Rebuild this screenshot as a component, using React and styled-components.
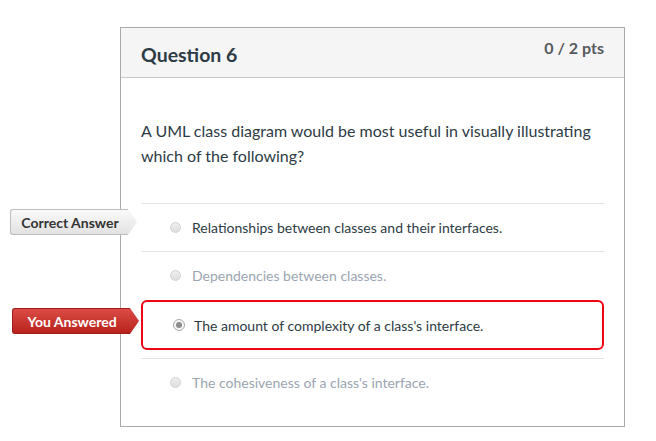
import React from 'react';
import styled, { createGlobalStyle, css } from 'styled-components';

const GlobalStyle = createGlobalStyle`
  body {
    margin: 0;
    background: #ffffff;
    font-family: Lato, "Open Sans", sans-serif;
  }
`;

const Page = styled.div`
  padding: 27px 0 0 120px;
`;

const Card = styled.div`
  width: 503px;
  height: 398px;
  border: 1px solid #aaaaaa;
  background: #ffffff;
`;

const Header = styled.div`
  height: 49px;
  background: #f5f5f5;
  border-bottom: 1px solid #c7c7c7;
  display: flex;
  justify-content: space-between;
  padding: 0 20px;
`;

const Title = styled.h2`
  margin: 15px 0 0;
  font-size: 19.5px;
  line-height: 24px;
  font-weight: 700;
  color: #2d3b45;
`;

const Points = styled.div`
  margin-top: 10px;
  font-size: 16px;
  line-height: 20px;
  font-weight: 700;
  color: #555a5e;
`;

const Body = styled.div`
  padding: 40px 20px 0 20px;
`;

const QuestionText = styled.p`
  margin: 0 0 35px;
  font-size: 16px;
  line-height: 25px;
  color: #2d3b45;
`;

const Answers = styled.div`
  display: flex;
  flex-direction: column;
`;

const AnswerRow = styled.div`
  position: relative;
  display: flex;
  align-items: center;
  gap: 11px;
  height: 47px;
  padding-left: 29px;
  border-top: 1px solid #e3e3e3;
  font-size: 14px;
  color: ${(p) => (p.faded ? '#9aa5b1' : '#2d3b45')};

  ${(p) =>
    p.wrong &&
    css`
      height: 46px;
      border: 2px solid #ee0612;
      border-radius: 6px;
      padding-left: 30px;
      gap: 9px;
      margin: 1px 0 8px;
    `}
`;

const Radio = styled.span`
  position: relative;
  width: 11px;
  height: 11px;
  box-sizing: border-box;
  border-radius: 50%;
  border: 1px solid ${(p) => (p.checked ? '#a9a9a9' : '#d2d2d2')};
  background: linear-gradient(#eeeeee, #dedede);
  flex-shrink: 0;

  ${(p) =>
    p.checked &&
    css`
      width: 12px;
      height: 12px;
      background: #f4f4f4;
      &::after {
        content: '';
        position: absolute;
        left: 2px;
        top: 2px;
        width: 6px;
        height: 6px;
        border-radius: 50%;
        background: #8c8c8c;
      }
    `}
`;

const Tag = styled.div`
  position: absolute;
  right: calc(100% + ${(p) => p.offset}px);
  top: ${(p) => p.top}px;
  width: 118px;
  height: 26px;
  box-sizing: border-box;
  display: flex;
  align-items: center;
  justify-content: center;
  padding-left: 1px;
  font-size: 14px;
  font-weight: 700;
  white-space: nowrap;
  border-radius: 3px 0 0 3px;
  ${(p) =>
    p.variant === 'wrong'
      ? css`
          color: #ffffff;
          background: linear-gradient(#dc4b45, #b8221d);
          border: 1px solid #a31d18;
          border-right: none;
        `
      : css`
          color: #333333;
          background: linear-gradient(#fafafa, #e2e2e2);
          border: 1px solid #bdbdbd;
          border-right: none;
        `}

  &::after {
    content: '';
    position: absolute;
    left: 100%;
    top: -1px;
    width: 9px;
    height: 26px;
    clip-path: polygon(0 0, 100% 50%, 0 100%);
    background: ${(p) =>
      p.variant === 'wrong' ? 'linear-gradient(#dc4b45, #b8221d)' : 'linear-gradient(#fafafa, #e2e2e2)'};
  }
`;

const answers = [
  { text: 'Relationships between classes and their interfaces.', tag: 'correct' },
  { text: 'Dependencies between classes.', faded: true },
  { text: "The amount of complexity of a class's interface.", tag: 'wrong', checked: true },
  { text: "The cohesiveness of a class's interface.", faded: true },
];

const App = () => (
  <>
    <GlobalStyle />
    <Page>
      <Card>
        <Header>
          <Title>Question 6</Title>
          <Points>0 / 2 pts</Points>
        </Header>
        <Body>
          <QuestionText>
            A UML class diagram would be most useful in visually illustrating which of the following?
          </QuestionText>
          <Answers>
            {answers.map((a) => (
              <AnswerRow key={a.text} faded={a.faded} wrong={a.tag === 'wrong'}>
                {a.tag === 'correct' && (
                  <Tag variant="correct" offset={13} top={5}>
                    Correct Answer
                  </Tag>
                )}
                {a.tag === 'wrong' && (
                  <Tag variant="wrong" offset={13} top={6}>
                    You Answered
                  </Tag>
                )}
                <Radio checked={a.checked} />
                {a.text}
              </AnswerRow>
            ))}
          </Answers>
        </Body>
      </Card>
    </Page>
  </>
);

export default App;
